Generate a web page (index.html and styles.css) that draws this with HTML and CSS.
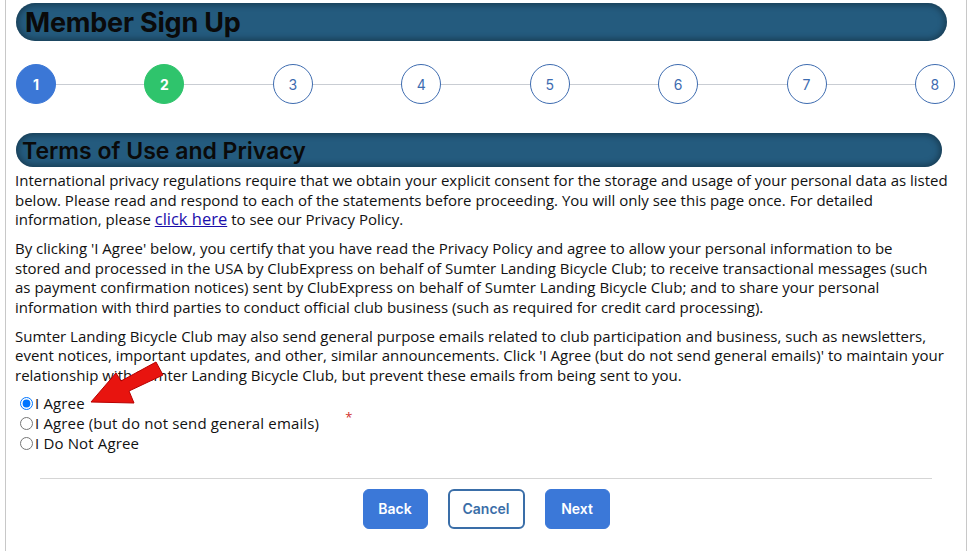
FILE: index.html
```html
<!DOCTYPE html>
<html>
<head>
<meta charset="utf-8">
<link rel="stylesheet" href="styles.css">
</head>
<body>
<div class="page">
  <h1 class="bar bar-main">Member Sign Up</h1>
  <div class="stepper">
    <div class="step-line"></div>
    <span class="step done">1</span>
    <span class="step current">2</span>
    <span class="step">3</span>
    <span class="step">4</span>
    <span class="step">5</span>
    <span class="step">6</span>
    <span class="step">7</span>
    <span class="step">8</span>
  </div>
  <h2 class="bar bar-sub">Terms of Use and Privacy</h2>
  <div class="content">
    <p>International privacy regulations require that we obtain your explicit consent for the storage and usage of your personal data as listed<br>below. Please read and respond to each of the statements before proceeding. You will only see this page once. For detailed<br>information, please <a href="#" class="big-link">click here</a> to see our Privacy Policy.</p>
    <p>By clicking 'I Agree' below, you certify that you have read the Privacy Policy and agree to allow your personal information to be<br>stored and processed in the USA by ClubExpress on behalf of Sumter Landing Bicycle Club; to receive transactional messages (such<br>as payment confirmation notices) sent by ClubExpress on behalf of Sumter Landing Bicycle Club; and to share your personal<br>information with third parties to conduct official club business (such as required for credit card processing).</p>
    <p>Sumter Landing Bicycle Club may also send general purpose emails related to club participation and business, such as newsletters,<br>event notices, important updates, and other, similar announcements. Click 'I Agree (but do not send general emails)' to maintain your<br>relationship with Sumter Landing Bicycle Club, but prevent these emails from being sent to you.</p>
    <div class="choices">
      <div class="radios">
        <label class="radio"><input type="radio" name="agree" checked>I Agree</label>
        <label class="radio"><input type="radio" name="agree">I Agree (but do not send general emails)</label>
        <label class="radio"><input type="radio" name="agree">I Do Not Agree</label>
      </div>
      <span class="req">*</span>
      <svg class="arrow" width="80" height="50" viewBox="0 0 80 50">
        <polygon points="3,43 28,14 33,22 68,3 75,16 41,32 46,44" fill="#e8140f" stroke="#b80000" stroke-width="1" stroke-linejoin="round"/>
      </svg>
    </div>
  </div>
  <div class="actions">
    <button class="btn btn-primary">Back</button>
    <button class="btn btn-outline">Cancel</button>
    <button class="btn btn-primary">Next</button>
  </div>
</div>
</body>
</html>
```
FILE: styles.css
```css
* { box-sizing: border-box; }
html, body { margin: 0; padding: 0; background: #fff; }
body { font-family: "Open Sans", "Noto Sans", sans-serif; color: #111; }
.page {
  margin-left: 5px;
  width: 962px;
  min-height: 551px;
  border-left: 1px solid #c8c8c8;
  border-right: 1px solid #c8c8c8;
  padding: 3px 0 0 10px;
}
.bar {
  margin: 0;
  border-radius: 20px;
  background: #245b7e;
  box-shadow: inset 0 0 6px 2px rgba(0,0,0,0.35);
  color: #0a0a0a;
  font-family: Inter, "Liberation Sans", sans-serif;
  padding-left: 9px;
}
.bar-main {
  width: 931px;
  height: 38px;
  font-size: 27px;
  font-weight: 700;
  line-height: 40px;
  letter-spacing: -0.2px;
}
.bar-sub {
  width: 926px;
  height: 34px;
  margin-top: 29px;
  font-size: 23px;
  font-weight: 600;
  line-height: 36px;
  padding-left: 6px;
}
.stepper {
  position: relative;
  width: 939px;
  height: 40px;
  margin-top: 23px;
  display: flex;
  justify-content: space-between;
  align-items: center;
}
.step-line {
  position: absolute;
  left: 20px;
  right: 20px;
  top: 20px;
  height: 1px;
  background: #c9cdd3;
}
.step {
  position: relative;
  width: 40px;
  height: 40px;
  border-radius: 50%;
  border: 1px solid #3e6cb0;
  background: #fff;
  color: #3e6cb0;
  display: flex;
  align-items: center;
  justify-content: center;
  font-family: Inter, sans-serif;
  font-size: 14px;
}
.step.done { background: #3b77d6; border-color: #3b77d6; color: #fff; font-weight: 700; }
.step.current { background: #2fc46c; border-color: #2fc46c; color: #fff; font-weight: 700; }
.content {
  margin-left: -1px;
  padding-top: 4px;
  font-size: 15px;
  line-height: 19.5px;
  width: 950px;
  white-space: nowrap;
}
.content p { margin: 0 0 9.5px 0; }
.big-link { color: #1a0dab; font-size: 16.5px; text-decoration: underline; line-height: 16px; }
.choices { position: relative; display: flex; align-items: flex-start; margin-top: -1px; }
.radios { display: flex; flex-direction: column; padding-left: 5px; font-size: 15px; letter-spacing: 0.15px; }
.radio { display: flex; align-items: center; height: 20px; }
.radio input { margin: 0 2px 0 0; width: 13px; height: 13px; }
.req { color: #d0302a; font-size: 13px; margin-left: 26px; margin-top: 14px; }
.arrow { position: absolute; left: 73px; top: -35px; }
.actions {
  width: 892px;
  margin: 24px 0 0 24px;
  border-top: 1px solid #d5d5d5;
  padding-top: 10px;
  display: flex;
  justify-content: center;
  gap: 20px;
}
.btn {
  height: 40px;
  border-radius: 6px;
  font-family: Inter, sans-serif;
  font-size: 14px;
  font-weight: 600;
}
.btn-primary { background: #3b78d8; color: #fff; border: 1px solid #3b78d8; width: 65px; padding: 0; }
.btn-outline { background: #fff; color: #3a6ea8; border: 2px solid #3a6ea8; width: 77px; padding: 0; }
```
